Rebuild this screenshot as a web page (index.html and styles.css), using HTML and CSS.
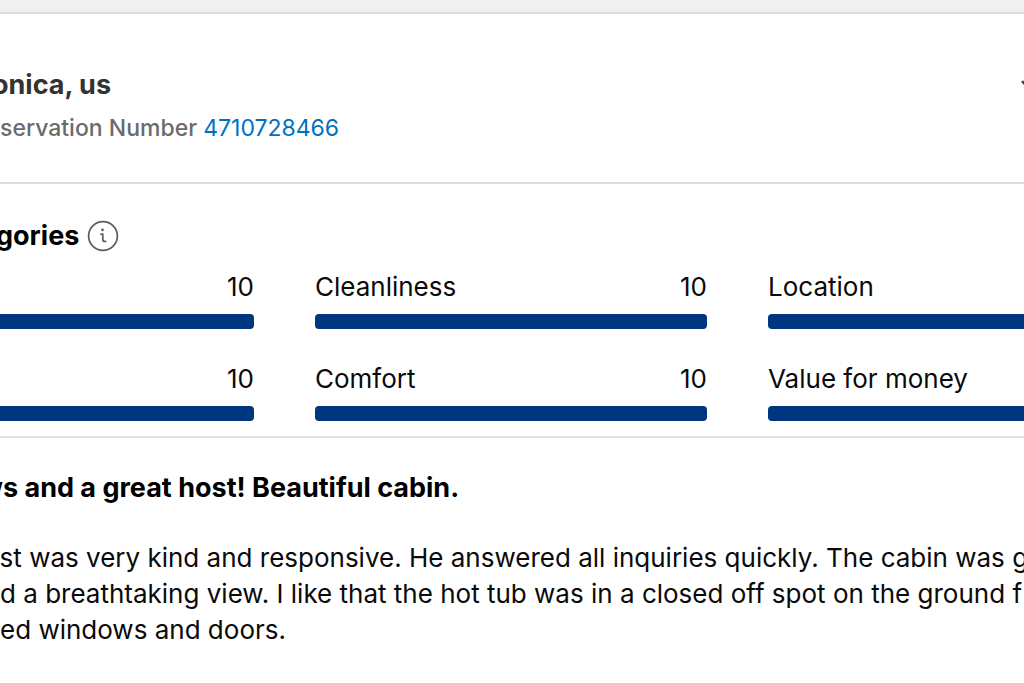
FILE: index.html
```html
<!DOCTYPE html>
<html lang="en">
<head>
<meta charset="utf-8">
<meta name="viewport" content="width=device-width, initial-scale=1">
<title>Guest review</title>
<link rel="stylesheet" href="styles.css">
</head>
<body>
<main class="review">
  <header class="guest">
    <div class="guest-info">
      <h1 class="guest-name">onica, us</h1>
      <p class="reservation">servation Number <a class="reservation-link" href="#">4710728466</a></p>
    </div>
    <button class="toggle" type="button" aria-expanded="true" aria-label="Toggle review">
      <svg width="24" height="16" viewBox="0 0 24 16" fill="none" stroke="#444" stroke-width="3" stroke-linecap="round"><path d="M3 3l9 9 9-9"/></svg>
    </button>
  </header>
  <section class="categories">
    <div class="categories-head">
      <h2 class="heading">gories</h2>
      <button class="info" type="button" aria-label="About categories">
        <svg width="32" height="32" viewBox="0 0 32 32" fill="none" stroke="#5c5c5c" stroke-width="1.7" stroke-linecap="round" stroke-linejoin="round"><circle cx="16" cy="16" r="14.4"/><path d="M14 14.2h1.8v5.2q0 2 2 2h.8"/><circle cx="15.5" cy="9.9" r="1.3" fill="#5c5c5c" stroke="none"/></svg>
      </button>
    </div>
    <div class="scores">
      <div class="score"><div class="score-row"><span></span><span>10</span></div><div class="bar"></div></div>
      <div class="score"><div class="score-row"><span>Cleanliness</span><span>10</span></div><div class="bar"></div></div>
      <div class="score"><div class="score-row"><span>Location</span></div><div class="bar"></div></div>
      <div class="score"><div class="score-row"><span></span><span>10</span></div><div class="bar"></div></div>
      <div class="score"><div class="score-row"><span>Comfort</span><span>10</span></div><div class="bar"></div></div>
      <div class="score"><div class="score-row"><span>Value for money</span></div><div class="bar"></div></div>
    </div>
  </section>
  <article class="comment">
    <h2 class="heading comment-title">ws and a great host! Beautiful cabin.</h2>
    <p class="comment-text comment-lead">ost was very kind and responsive. He answered all inquiries quickly. The cabin was g</p>
    <p class="comment-text">d a breathtaking view. I like that the hot tub was in a closed off spot on the ground f</p>
    <p class="comment-text">ed windows and doors.</p>
  </article>
</main>
</body>
</html>
```
FILE: styles.css
```css
* { box-sizing: border-box; }
body {
  margin: 0;
  overflow-x: hidden;
  background: #fff;
  color: #0a0a0a;
  font: 26px/36px Inter, "Liberation Sans", sans-serif;
}
h1, h2, p { margin: 0; }
button { padding: 0; border: 0; background: none; cursor: pointer; }
svg { display: block; }
.review {
  overflow: hidden;
  border-top: 12px solid #f0f0f0;
}
.guest {
  display: flex;
  justify-content: space-between;
  align-items: flex-start;
  padding: 53px 0 36px;
  border-top: 2px solid #dcdcdc;
  border-bottom: 2px solid #dcdcdc;
}
.guest-name {
  margin-left: -8px;
  color: #333;
  font-size: 27px;
  font-weight: 700;
  line-height: 36px;
}
.reservation {
  margin-top: 7px;
  color: #6b6b6b;
  font-size: 23px;
  font-weight: 500;
}
.reservation-link { color: #0071c2; font-weight: 400; text-decoration: none; }
.toggle { margin: 12px -20px 0 0; }
.categories { padding: 34px 0 15px; border-bottom: 2px solid #e0e0e0; }
.categories-head { display: flex; align-items: center; gap: 8px; margin-left: -4px; }
.heading { color: #000; font-size: 27px; font-weight: 700; line-height: 36px; }
.scores {
  display: grid;
  grid-template-columns: repeat(3, 1fr);
  gap: 32px 61px;
  margin: 15px -136px 0 -138px;
}
.score-row { display: flex; justify-content: space-between; height: 36px; }
.bar { height: 15px; margin-top: 9px; border-radius: 4px; background: #003580; }
.comment { padding: 32px 0; }
.comment-title { margin: 0 0 34px -20px; }
.comment-text { white-space: nowrap; }
.comment-lead { margin-left: -16px; }
```
